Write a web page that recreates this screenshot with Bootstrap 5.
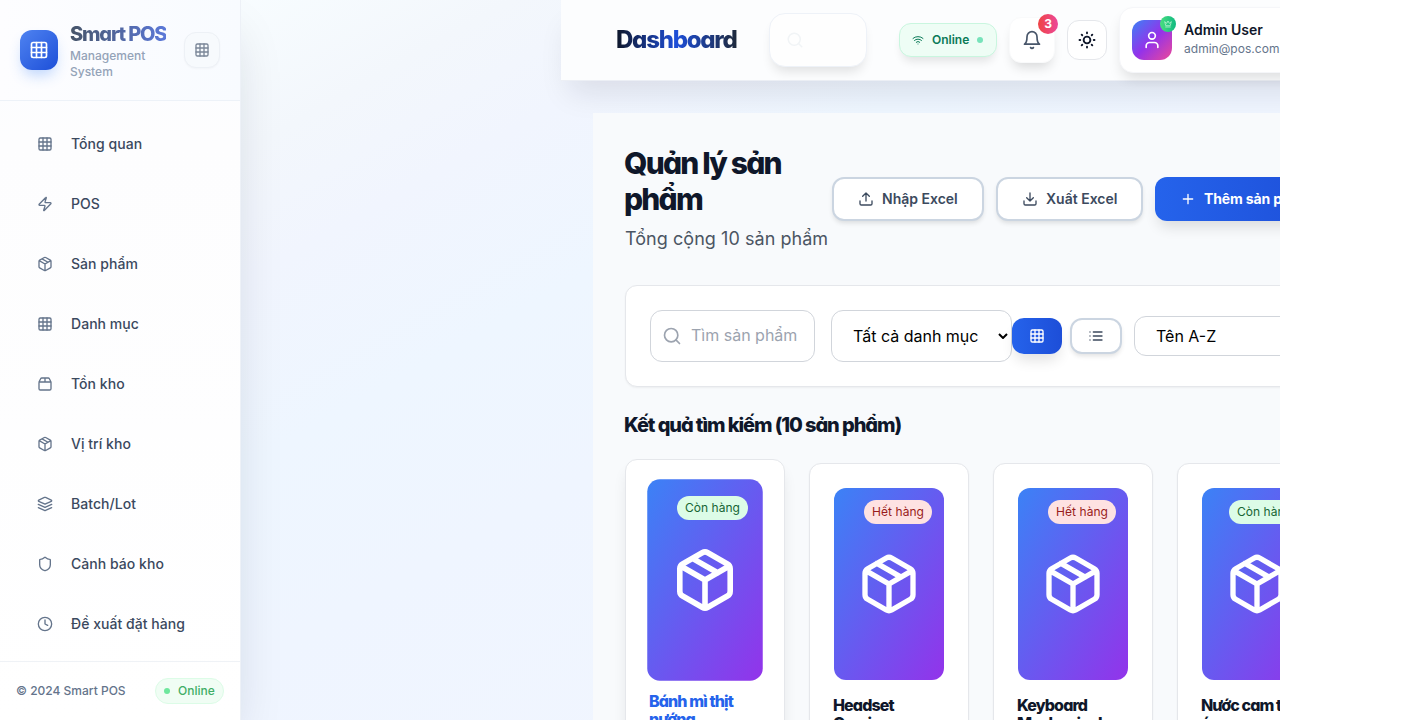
<!DOCTYPE html>
<html lang="vi">
<head>
<meta charset="utf-8">
<meta name="viewport" content="width=device-width, initial-scale=1">
<title>Smart POS</title>
<link rel="stylesheet" href="https://cdn.jsdelivr.net/npm/bootstrap@5.3.0/dist/css/bootstrap.min.css">
<style>
body{font-family:Inter,"Noto Sans",sans-serif;background:#fff;color:#0f172a;overflow:hidden;height:720px;line-height:1.5}
svg{fill:none;stroke:currentColor;stroke-width:2;stroke-linecap:round;stroke-linejoin:round;flex:none;display:block}
.app{width:1280px;height:720px;background:linear-gradient(to bottom right,#f8fdff 8%,#f3f7fc 20%,#f1f5fe 29%,#eef6ff 42%,#eff5ff 56%,#f2f6fe 100%)}
.display-face{font-family:Inter,"Noto Sans",sans-serif;font-feature-settings:"cv11" 1,"ss03" 1;font-weight:800}
.sidebar{width:241px;background:linear-gradient(180deg,#fbfdff,#fdfdfe 20%,#fff);border-right:1px solid #edf1f7;box-shadow:0 25px 50px -12px rgba(15,23,42,.16);z-index:1}
.side-head{height:101px;border-bottom:1px solid #edf2f8;padding:0 20px;background:linear-gradient(90deg,#fdfdff,#f8fbff)}
.logo-tile{width:38px;height:40px;border-radius:12px;color:#fff;background:linear-gradient(135deg,#4f83f1,#1d4fd8);box-shadow:0 8px 14px -3px rgba(59,130,246,.32)}
.brand-block{margin-left:12px;padding-top:4px}
.brand-name{font-size:20px;line-height:20px;letter-spacing:-1.2px;white-space:nowrap;background:linear-gradient(90deg,#475569,#5b78d8);-webkit-background-clip:text;color:transparent}
.brand-sub{font-size:12px;line-height:16px;font-weight:500;color:#94a3b8;width:90px}
.toggle-tile{width:36px;height:36px;border:1px solid #edf1f6;border-radius:12px;background:#f7fafd;color:#7b8798;box-shadow:0 1px 2px rgba(0,0,0,.03)}
.side-nav{padding-top:13px}
.side-link{height:60px;padding-left:37px;gap:18px;font-size:14px;font-weight:500;color:#3b495e;letter-spacing:.04px}
.side-link span{margin-top:-1px}
.side-link svg{color:#64748b}
.side-foot{height:59px;border-top:1px solid #eff2f6;padding:0 16px;font-size:12px;font-weight:500;color:#64748b}
.foot-pill{height:26px;width:69px;padding-left:8px;gap:8px;border:1px solid #dcfce7;border-radius:13px;background:#f0fdf4;color:#3fae66}
.dot{width:6px;height:6px;border-radius:50%;background:#6ee79d;flex:none}
.workspace{width:800px;margin-left:320px}
.topbar{height:81px;background:#fcfdfe;border-bottom:1px solid #eceff5;box-shadow:0 20px 30px -8px rgba(15,23,42,.1);position:relative}
.page-name{font-size:24px;letter-spacing:-1.25px;line-height:32px;width:121px;margin-left:55px;white-space:nowrap;background:linear-gradient(90deg,#0f172a,#1d4ed8 50%,#1e293b);-webkit-background-clip:text;color:transparent}
.top-search{width:98px;height:54px;margin-left:32px;border:1px solid #eef2f8;border-radius:16px;background:#fefefe;color:#f1f4f6;padding-left:16px;box-shadow:0 8px 12px -4px rgba(0,0,0,.12)}
.net-pill{width:98px;height:34px;margin-left:32px;border:1px solid #c9f6df;border-radius:12px;background:#eefdf5;color:#0b7a58;font-size:12px;font-weight:600;padding-left:12px;box-shadow:0 7px 10px -3px rgba(0,0,0,.11)}
.bell-tile{width:46px;height:46px;margin-left:12px;border:1px solid #f9fafb;border-radius:12px;background:#fff;color:#475569;box-shadow:0 8px 12px -4px rgba(0,0,0,.15);position:relative}
.count{position:absolute;top:-4px;right:-4px;width:20px;height:20px;border-radius:50%;background:linear-gradient(90deg,#ef4444,#ec4899);color:#fff;font-size:12px;font-weight:700;line-height:20px;text-align:center}
.theme-tile{width:40px;height:40px;margin-left:12px;border:1px solid #e5e7eb;border-radius:12px;background:#fff;color:#0f172a}
.theme-tile svg{stroke-width:2.5}
.user-card{width:240px;height:66px;margin-left:12px;border:1px solid #f5f6f9;border-radius:14px;background:#fff;padding-left:12px;gap:12px;box-shadow:0 8px 14px -3px rgba(0,0,0,.13);flex:none}
.user-name{font-size:14px;line-height:20px;font-weight:600;margin-top:-2px}
.user-mail{font-size:12px;line-height:18px;color:#64748b;letter-spacing:.03px}
.avatar{width:40px;height:40px;border-radius:12px;color:#fff;background:linear-gradient(135deg,#3b82f6,#9333ea 50%,#ec4899);position:relative}
.crown{position:absolute;top:-4px;right:-4px;width:16px;height:16px;border-radius:50%;background:linear-gradient(90deg,#4ade80,#10b981);color:#d3f9e2}
.content{margin:32px 0 0 32px;padding:32px 0 0 32px;height:607px;background:#f8fafc;position:relative}
.content h1{font-size:30px;line-height:36px;letter-spacing:-1.8px;color:#0f172a;width:208px;white-space:nowrap;margin-left:-1px}
.total{font-size:18px;line-height:28px;color:#4b5563;white-space:nowrap;margin-top:8px;letter-spacing:.05px}
.act{height:44px;border:2px solid #cbd5e1;border-radius:12px;background:#fff;color:#3c4a5e;font-size:14px;font-weight:600;gap:8px;box-shadow:0 3px 5px -1px rgba(0,0,0,.12);padding:0 0 0 24px;white-space:nowrap;flex:none}
.act span{margin-top:-1px}
.act-main{background:linear-gradient(90deg,#2563eb,#1d4ed8);color:#fff;border:0;box-shadow:0 9px 14px -3px rgba(0,0,0,.12)}
.act.act-main{padding-left:25px;font-weight:700;letter-spacing:-.15px}
.filters{width:780px;height:102px;margin-top:32px;border:1px solid #e5e7eb;border-radius:12px;background:#fff;box-shadow:0 1px 2px rgba(0,0,0,.05);padding-left:24px}
.field-box{height:52px;border:1px solid #d1d5db;border-radius:12px;background:#fff;color:#000;font-size:16px;white-space:nowrap;flex:none}
.view-btn{border-radius:12px;height:36px;flex:none}
.content h2{font-size:20px;line-height:28px;letter-spacing:-1.09px;margin:24px 0 24px -1px;white-space:nowrap}
.product{width:160px;height:320px;border:1px solid #e5e7eb;border-radius:12px;background:#fff;padding:24px;box-shadow:0 1px 2px rgba(0,0,0,.05);flex:none}
.thumb{position:relative;height:192px}
.thumb-fill{height:192px;border-radius:12px;background:linear-gradient(to bottom right,#3b82f6,#9333ea);color:#fff}
.stock{position:absolute;top:12px;right:12px;height:24px;border-radius:12px;font-size:12px;line-height:24px;padding:0 8px;white-space:nowrap;letter-spacing:.05px}
.in-stock{background:#dcfce7;color:#166534}
.no-stock{background:#fee2e2;color:#991b1b}
.product h3{font-size:16px;line-height:18px;letter-spacing:-.88px;margin:16px 0 0 -1px;white-space:nowrap}
.is-hover{transform:translateY(-4px);box-shadow:0 10px 15px -3px rgba(0,0,0,.1)}
.is-hover .thumb-fill{transform:scale(1.05)}
.is-hover h3{color:#2563eb}
</style>
<script src="https://cdn.jsdelivr.net/npm/bootstrap@5.3.0/dist/js/bootstrap.bundle.min.js"></script>
</head>
<body>
<svg width="0" height="0" class="position-absolute">
<symbol id="grid" viewBox="0 0 24 24"><rect x="3" y="3" width="18" height="18" rx="2"/><path d="M3 9h18M3 15h18M9 3v18M15 3v18"/></symbol>
<symbol id="box" viewBox="0 0 24 24"><path d="m7.5 4.27 9 5.15M21 8a2 2 0 0 0-1-1.73l-7-4a2 2 0 0 0-2 0l-7 4A2 2 0 0 0 3 8v8a2 2 0 0 0 1 1.73l7 4a2 2 0 0 0 2 0l7-4A2 2 0 0 0 21 16ZM3.3 7l8.7 5 8.7-5M12 22V12"/></symbol>
<symbol id="search" viewBox="0 0 24 24"><circle cx="11" cy="11" r="8"/><path d="m21 21-4.3-4.3"/></symbol>
</svg>
<div class="app d-flex overflow-hidden">
<aside class="sidebar d-flex flex-column flex-shrink-0">
  <div class="side-head d-flex align-items-center">
    <div class="logo-tile d-flex align-items-center justify-content-center"><svg width="20" height="20"><use href="#grid"/></svg></div>
    <div class="brand-block me-auto"><div class="brand-name display-face mb-1">Smart POS</div><div class="brand-sub">Management System</div></div>
    <div class="toggle-tile d-flex align-items-center justify-content-center"><svg width="16" height="16"><use href="#grid"/></svg></div>
  </div>
  <nav class="side-nav flex-grow-1 overflow-hidden">
    <div class="side-link d-flex align-items-center"><svg width="16" height="16"><use href="#grid"/></svg><span>Tổng quan</span></div>
    <div class="side-link d-flex align-items-center"><svg width="16" height="16" viewBox="0 0 24 24"><path d="M4 14a1 1 0 0 1-.78-1.63l9.9-10.2a.5.5 0 0 1 .86.46l-1.92 6.02A1 1 0 0 0 13 10h7a1 1 0 0 1 .78 1.63l-9.9 10.2a.5.5 0 0 1-.86-.46l1.92-6.02A1 1 0 0 0 11 14z"/></svg><span>POS</span></div>
    <div class="side-link d-flex align-items-center"><svg width="16" height="16"><use href="#box"/></svg><span>Sản phẩm</span></div>
    <div class="side-link d-flex align-items-center"><svg width="16" height="16"><use href="#grid"/></svg><span>Danh mục</span></div>
    <div class="side-link d-flex align-items-center"><svg width="16" height="16" viewBox="0 0 24 24"><path d="M3 9h18v10a2 2 0 0 1-2 2H5a2 2 0 0 1-2-2zl2.45-4.9A2 2 0 0 1 7.24 3h9.52a2 2 0 0 1 1.8 1.1L21 9M12 3v6"/></svg><span>Tồn kho</span></div>
    <div class="side-link d-flex align-items-center"><svg width="16" height="16"><use href="#box"/></svg><span>Vị trí kho</span></div>
    <div class="side-link d-flex align-items-center"><svg width="16" height="16" viewBox="0 0 24 24"><path d="m12.83 2.18a2 2 0 0 0-1.66 0L2.6 6.08a1 1 0 0 0 0 1.83l8.58 3.91a2 2 0 0 0 1.66 0l8.58-3.9a1 1 0 0 0 0-1.83ZM22 12.5l-9.17 4.16a2 2 0 0 1-1.66 0L2 12.5M22 17.5l-9.17 4.16a2 2 0 0 1-1.66 0L2 17.5"/></svg><span>Batch/Lot</span></div>
    <div class="side-link d-flex align-items-center"><svg width="16" height="16" viewBox="0 0 24 24"><path d="M20 13c0 5-3.5 7.5-7.66 8.95a1 1 0 0 1-.67-.01C7.5 20.5 4 18 4 13V6a1 1 0 0 1 1-1c2 0 4.5-1.2 6.24-2.72a1.17 1.17 0 0 1 1.52 0C14.51 3.81 17 5 19 5a1 1 0 0 1 1 1z"/></svg><span>Cảnh báo kho</span></div>
    <div class="side-link d-flex align-items-center"><svg width="16" height="16" viewBox="0 0 24 24"><circle cx="12" cy="12" r="10"/><path d="M12 6v6l4 2"/></svg><span>Đề xuất đặt hàng</span></div>
  </nav>
  <div class="side-foot d-flex align-items-center justify-content-between"><span>© 2024 Smart POS</span><span class="foot-pill d-flex align-items-center"><i class="dot"></i>Online</span></div>
</aside>
<main class="workspace flex-shrink-0">
  <header class="topbar d-flex align-items-center">
    <div class="page-name display-face flex-shrink-0">Dashboard</div>
    <div class="top-search d-flex align-items-center flex-shrink-0"><svg width="18" height="18"><use href="#search"/></svg></div>
    <div class="net-pill d-flex align-items-center flex-shrink-0"><svg width="12" height="12" viewBox="0 0 24 24"><path d="M12 20h.01M2 8.82a15 15 0 0 1 20 0M5 12.86a10 10 0 0 1 14 0M8.5 16.43a5 5 0 0 1 7 0"/></svg><span class="ms-2 me-2">Online</span><i class="dot" style="background:#77e3ba"></i></div>
    <div class="bell-tile d-flex align-items-center justify-content-center flex-shrink-0"><svg width="20" height="20" viewBox="0 0 24 24"><path d="M6 8a6 6 0 0 1 12 0c0 7 3 9 3 9H3s3-2 3-9M10.3 21a1.94 1.94 0 0 0 3.4 0"/></svg><span class="count">3</span></div>
    <div class="theme-tile d-flex align-items-center justify-content-center flex-shrink-0"><svg width="18" height="18" viewBox="0 0 24 24"><circle cx="12" cy="12" r="4.5"/><path d="M12 2v1M12 21v1M4.9 4.9l.8.8M18.3 18.3l.8.8M2 12h1M21 12h1M5.7 18.3l-.8.8M19.1 4.9l-.8.8"/></svg></div>
    <div class="user-card d-flex align-items-center"><div class="avatar d-flex align-items-center justify-content-center"><svg width="20" height="20" viewBox="0 0 24 24"><path d="M19 21v-2a4 4 0 0 0-4-4H9a4 4 0 0 0-4 4v2"/><circle cx="12" cy="7" r="4"/></svg><span class="crown d-flex align-items-center justify-content-center"><svg width="8" height="8" viewBox="0 0 24 24"><path d="M5 16 2 5l6 5 4-7 4 7 6-5-3 11zM5 21h14"/></svg></span></div>
      <div><div class="user-name">Admin User</div><div class="user-mail">admin@pos.com</div></div></div>
  </header>
  <section class="content">
    <div class="d-flex align-items-center" style="height:108px">
      <div style="width:207px" class="flex-shrink-0"><h1 class="display-face mb-0">Quản lý sản<br>phẩm</h1><div class="total">Tổng cộng 10 sản phẩm</div></div>
      <div class="act d-flex align-items-center" style="width:152px"><svg width="16" height="16" viewBox="0 0 24 24"><path d="M21 15v4a2 2 0 0 1-2 2H5a2 2 0 0 1-2-2v-4M17 8l-5-5-5 5M12 3v12"/></svg><span>Nhập Excel</span></div>
      <div class="act d-flex align-items-center" style="width:147px;margin-left:12px"><svg width="16" height="16" viewBox="0 0 24 24"><path d="M21 15v4a2 2 0 0 1-2 2H5a2 2 0 0 1-2-2v-4M7 10l5 5 5-5M12 15V3"/></svg><span>Xuất Excel</span></div>
      <div class="act act-main d-flex align-items-center" style="width:180px;margin-left:12px"><svg width="16" height="16" viewBox="0 0 24 24"><path d="M5 12h14M12 5v14"/></svg><span>Thêm sản phẩm</span></div>
    </div>
    <div class="filters d-flex align-items-center">
      <div class="field-box d-flex align-items-center" style="width:165px;padding-left:11px;gap:9px;color:#9ca3af"><svg width="20" height="20"><use href="#search"/></svg><span style="margin-top:-2px">Tìm sản phẩm</span></div>
      <div class="field-box d-flex align-items-center justify-content-between" style="width:181px;margin-left:16px;padding:0 3px 0 21px">Tất cả danh mục<svg width="10" height="6" viewBox="0 0 10 6"><path d="m1 1 4 4 4-4" stroke-linecap="butt" stroke-linejoin="miter"/></svg></div>
      <div class="view-btn act-main d-flex align-items-center justify-content-center" style="width:50px"><svg width="16" height="16"><use href="#grid"/></svg></div>
      <div class="act view-btn d-flex align-items-center justify-content-center" style="width:52px;margin-left:8px;height:36px;padding:0"><svg width="16" height="16" viewBox="0 0 24 24"><path d="M8 6h13M8 12h13M8 18h13M3 6h.01M3 12h.01M3 18h.01"/></svg></div>
      <div class="field-box d-flex align-items-center" style="width:190px;margin-left:12px;height:40px;padding-left:21px">Tên A-Z</div>
    </div>
    <h2 class="display-face">Kết quả tìm kiếm (10 sản phẩm)</h2>
    <div class="d-flex gap-4">
      <div class="product is-hover"><div class="thumb"><div class="thumb-fill d-flex align-items-center justify-content-center"><svg width="64" height="64"><use href="#box"/></svg></div><span class="stock in-stock">Còn hàng</span></div><h3 class="display-face">Bánh mì thịt<br>nướng</h3></div>
      <div class="product"><div class="thumb"><div class="thumb-fill d-flex align-items-center justify-content-center"><svg width="64" height="64"><use href="#box"/></svg></div><span class="stock no-stock">Hết hàng</span></div><h3 class="display-face">Headset<br>Gaming</h3></div>
      <div class="product"><div class="thumb"><div class="thumb-fill d-flex align-items-center justify-content-center"><svg width="64" height="64"><use href="#box"/></svg></div><span class="stock no-stock">Hết hàng</span></div><h3 class="display-face">Keyboard<br>Mechanical</h3></div>
      <div class="product"><div class="thumb"><div class="thumb-fill d-flex align-items-center justify-content-center"><svg width="64" height="64"><use href="#box"/></svg></div><span class="stock in-stock">Còn hàng</span></div><h3 class="display-face">Nước cam tươi<br>ép</h3></div>
    </div>
  </section>
</main>
</div>
</body>
</html>
